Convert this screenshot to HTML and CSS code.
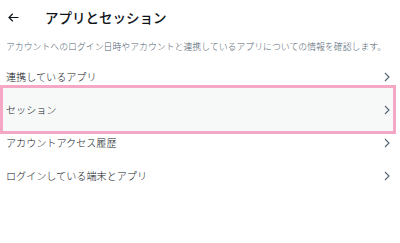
FILE: index.html
```html
<!DOCTYPE html>
<html lang="ja">
<head>
    <meta charset="UTF-8">
    <meta name="viewport" content="width=device-width, initial-scale=1.0">
    <title>アプリとセッション</title>
    <link rel="stylesheet" href="styles.css">
</head>
<body>
    <header class="top-bar">
        <span class="back">
            <svg width="11" height="9" viewBox="0 0 11 9"><path d="M10.5 4.5H1.2M4.8 0.8L1 4.5l3.8 3.7" fill="none" stroke="#0f1419" stroke-width="1.2"/></svg>
        </span>
        <h1>アプリとセッション</h1>
    </header>
    <p class="intro">アカウントへのログイン日時やアカウントと連携しているアプリについての情報を確認します。</p>
    <ul class="menu">
        <li class="menu-item">
            <span>連携しているアプリ</span>
            <svg class="chev" width="6" height="10" viewBox="0 0 6 10"><path d="M1 1l4 4-4 4" fill="none" stroke="#536471" stroke-width="1.1"/></svg>
        </li>
        <li class="menu-item active">
            <span>セッション</span>
            <svg class="chev" width="6" height="10" viewBox="0 0 6 10"><path d="M1 1l4 4-4 4" fill="none" stroke="#536471" stroke-width="1.1"/></svg>
        </li>
        <li class="menu-item">
            <span>アカウントアクセス履歴</span>
            <svg class="chev" width="6" height="10" viewBox="0 0 6 10"><path d="M1 1l4 4-4 4" fill="none" stroke="#536471" stroke-width="1.1"/></svg>
        </li>
        <li class="menu-item">
            <span>ログインしている端末とアプリ</span>
            <svg class="chev" width="6" height="10" viewBox="0 0 6 10"><path d="M1 1l4 4-4 4" fill="none" stroke="#536471" stroke-width="1.1"/></svg>
        </li>
    </ul>
</body>
</html>
```

FILE: styles.css
```css
body {
    margin: 0;
    background: #fff;
    color: #0f1419;
    font-family: "Noto Sans CJK JP", "Noto Sans", sans-serif;
}
.top-bar {
    height: 34px;
    display: flex;
    align-items: center;
    padding-left: 8px;
}
.back {
    width: 37px;
    display: flex;
    align-items: center;
}
.top-bar h1 {
    margin: 0;
    font-size: 13.5px;
    font-weight: 500;
}
.intro {
    margin: 0;
    height: 26px;
    line-height: 26px;
    padding-left: 6px;
    font-size: 8.9px;
    font-weight: 300;
    color: #536471;
    white-space: nowrap;
}
.menu {
    list-style: none;
    margin: 0;
    padding: 0;
}
.menu-item {
    height: 33px;
    display: flex;
    align-items: center;
    justify-content: space-between;
    padding: 0 10px 0 6px;
    font-size: 10.1px;
    font-weight: 300;
    position: relative;
    z-index: 0;
}
.menu-item.active::before {
    content: "";
    position: absolute;
    top: -8px;
    bottom: -8px;
    left: 0;
    right: 4px;
    background: #f7f9f9;
    border: 3px solid #f4a8c6;
    z-index: -1;
}
.chev {
    display: block;
}
```
